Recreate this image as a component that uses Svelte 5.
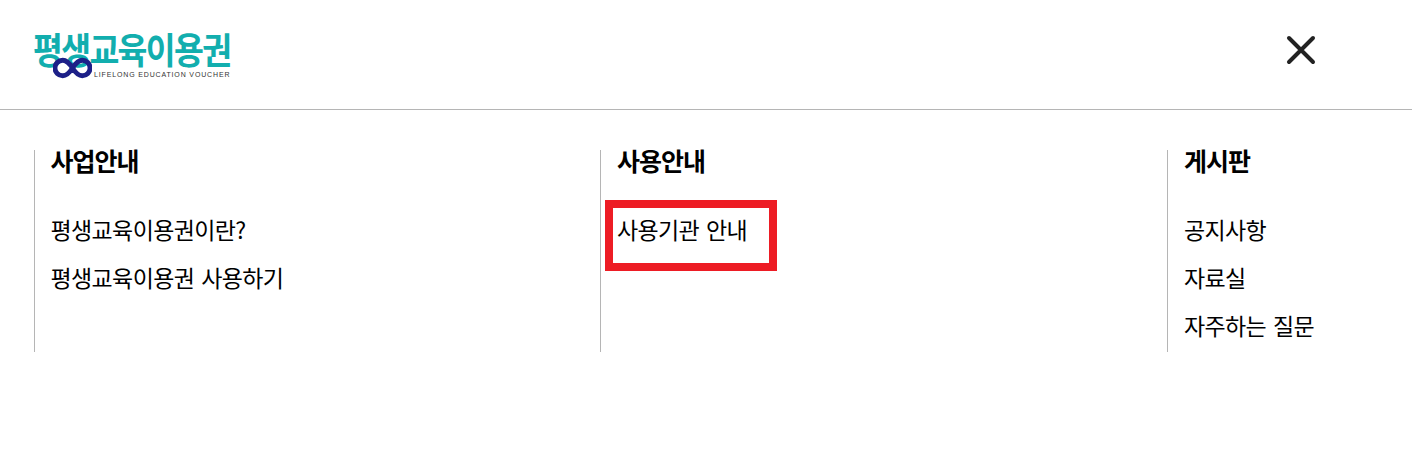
<script>
  const columns = [
    { title: '사업안내', links: ['평생교육이용권이란?', '평생교육이용권 사용하기'] },
    { title: '사용안내', links: ['사용기관 안내'], marked: true },
    { title: '게시판', links: ['공지사항', '자료실', '자주하는 질문'] }
  ];
</script>

<div class="page">
  <header>
    <div class="logo">
      <span class="logo-name">평생교육이용권</span>
      <svg class="infinity" viewBox="0 0 40 22" aria-hidden="true">
        <path d="M20 11C16.500 5.500 14 3 10 3a8 8 0 0 0 0 16c4 0 6.500-2.500 10-8s6-8 10-8a8 8 0 0 1 0 16c-4 0-6.500-2.500-10-8z" />
      </svg>
      <span class="logo-sub">LIFELONG EDUCATION VOUCHER</span>
    </div>
    <button class="close" aria-label="닫기">
      <svg viewBox="0 0 30 30" width="30" height="30">
        <path d="M3 3l24 24M27 3L3 27" />
      </svg>
    </button>
  </header>

  <nav>
    {#each columns as col}
      <section>
        <h2>{col.title}</h2>
        <ul>
          {#each col.links as link}
            <li class:marked={col.marked}>{link}</li>
          {/each}
        </ul>
      </section>
    {/each}
  </nav>
</div>

<style>
  :global(body) {
    margin: 0;
    background: #fff;
  }

  .page {
    font-family: "Noto Sans CJK KR", "Noto Sans", sans-serif;
    color: #000;
    height: 468px;
    overflow: hidden;
  }

  header {
    display: flex;
    justify-content: space-between;
    align-items: flex-start;
    box-sizing: border-box;
    height: 110px;
    padding: 25px 96px 0 34px;
    border-bottom: 1px solid #b5b5b5;
  }

  .logo {
    position: relative;
    width: 200px;
    height: 60px;
  }

  .logo-name {
    position: absolute;
    left: -1px;
    top: 0;
    font-size: 32.500px;
    line-height: 46px;
    font-weight: 700;
    letter-spacing: -1.700px;
    color: #12aeae;
    white-space: nowrap;
    transform: scaleY(1.12);
  }

  .infinity {
    position: absolute;
    left: 19px;
    top: 32px;
    width: 39px;
    height: 22px;
  }

  .infinity path {
    fill: none;
    stroke: #1d2088;
    stroke-width: 5;
  }

  .logo-sub {
    position: absolute;
    left: 60px;
    top: 45px;
    font-family: "Liberation Sans", sans-serif;
    font-size: 7px;
    line-height: 10px;
    font-weight: 400;
    letter-spacing: 0.850px;
    color: #333;
    white-space: nowrap;
  }

  .close {
    display: flex;
    padding: 0;
    border: none;
    background: none;
    margin: 9.500px 0.500px 0 0;
  }

  .close path {
    fill: none;
    stroke: #222;
    stroke-width: 4;
    stroke-linecap: round;
  }

  nav {
    display: grid;
    grid-template-columns: 566.400px 567px 1fr;
    margin: 40px 0 0 33.600px;
  }

  section {
    height: 202px;
    padding-left: 16px;
    border-left: 1px solid #b5b5b5;
  }

  h2 {
    margin: 0 0 34px;
    font-size: 25px;
    line-height: 21px;
    font-weight: 700;
    letter-spacing: -1px;
  }

  ul {
    margin: 0;
    padding: 0;
    list-style: none;
  }

  li {
    position: relative;
    font-size: 23px;
    line-height: 48px;
    letter-spacing: -0.650px;
    word-spacing: 2.500px;
    white-space: nowrap;
  }

  li.marked::after {
    content: "";
    position: absolute;
    left: -12px;
    top: -5px;
    width: 156px;
    height: 55px;
    border: 8px solid #ed1c24;
  }
</style>
